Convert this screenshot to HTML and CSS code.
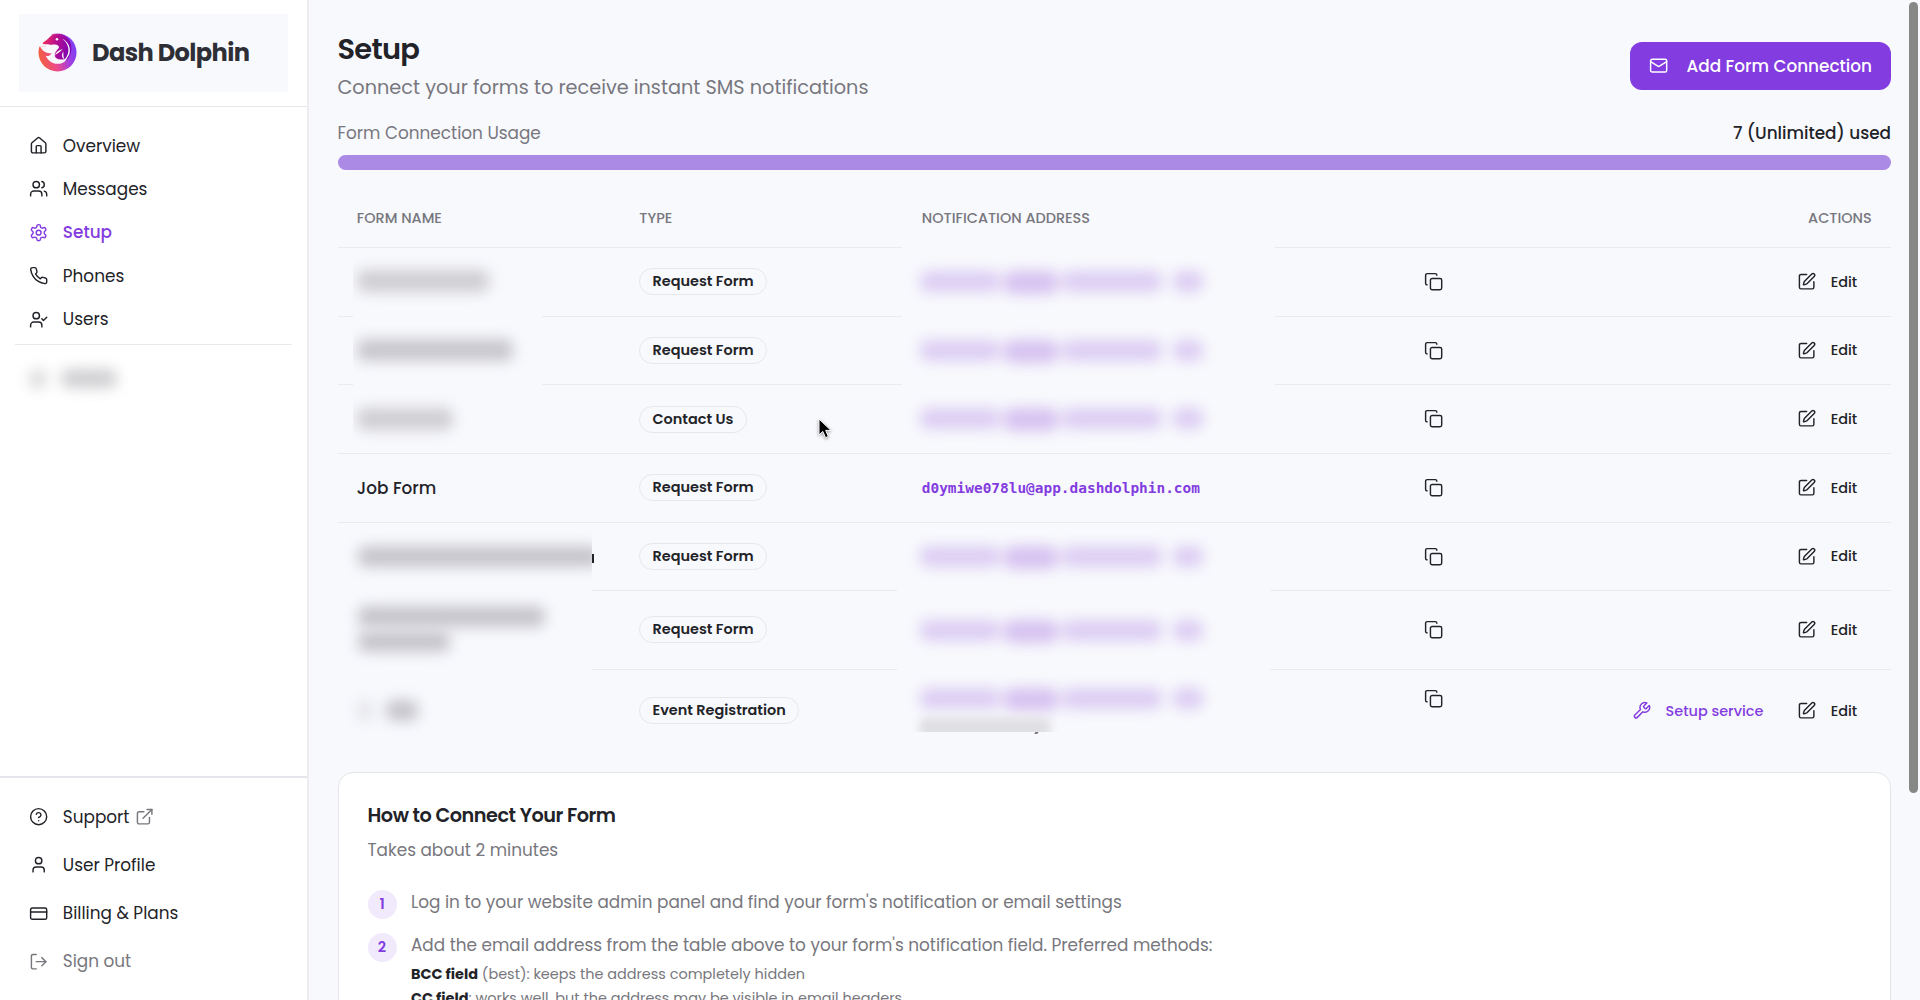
FILE: index.html
```html
<!DOCTYPE html>
<html lang="en">
<head>
  <meta charset="utf-8">
  <title>Dash Dolphin - Setup</title>
  <link rel="stylesheet" href="styles.css">
</head>
<body>
  <!-- icon set -->
  <svg class="sprite">
    <symbol id="i-home" viewBox="0 0 24 24"><path d="M15 21v-8a1 1 0 0 0-1-1h-4a1 1 0 0 0-1 1v8"/><path d="M3 10a2 2 0 0 1 .709-1.528l7-6a2 2 0 0 1 2.582 0l7 6A2 2 0 0 1 21 10v9a2 2 0 0 1-2 2H5a2 2 0 0 1-2-2z"/></symbol>
    <symbol id="i-users" viewBox="0 0 24 24"><path d="M16 21v-2a4 4 0 0 0-4-4H6a4 4 0 0 0-4 4v2"/><circle cx="9" cy="7" r="4"/><path d="M22 21v-2a4 4 0 0 0-3-3.87"/><path d="M16 3.13a4 4 0 0 1 0 7.75"/></symbol>
    <symbol id="i-settings" viewBox="0 0 24 24"><path d="M12.22 2h-.44a2 2 0 0 0-2 2v.18a2 2 0 0 1-1 1.73l-.43.25a2 2 0 0 1-2 0l-.15-.08a2 2 0 0 0-2.73.73l-.22.38a2 2 0 0 0 .73 2.73l.15.1a2 2 0 0 1 1 1.72v.51a2 2 0 0 1-1 1.74l-.15.09a2 2 0 0 0-.73 2.73l.22.38a2 2 0 0 0 2.73.73l.15-.08a2 2 0 0 1 2 0l.43.25a2 2 0 0 1 1 1.73V20a2 2 0 0 0 2 2h.44a2 2 0 0 0 2-2v-.18a2 2 0 0 1 1-1.73l.43-.25a2 2 0 0 1 2 0l.15.08a2 2 0 0 0 2.73-.73l.22-.39a2 2 0 0 0-.73-2.73l-.15-.08a2 2 0 0 1-1-1.74v-.5a2 2 0 0 1 1-1.74l.15-.09a2 2 0 0 0 .73-2.73l-.22-.38a2 2 0 0 0-2.73-.73l-.15.08a2 2 0 0 1-2 0l-.43-.25a2 2 0 0 1-1-1.73V4a2 2 0 0 0-2-2z"/><circle cx="12" cy="12" r="3"/></symbol>
    <symbol id="i-phone" viewBox="0 0 24 24"><path d="M22 16.92v3a2 2 0 0 1-2.18 2 19.79 19.79 0 0 1-8.63-3.07 19.5 19.5 0 0 1-6-6 19.79 19.79 0 0 1-3.07-8.67A2 2 0 0 1 4.11 2h3a2 2 0 0 1 2 1.72 12.84 12.84 0 0 0 .7 2.81 2 2 0 0 1-.45 2.11L8.09 9.91a16 16 0 0 0 6 6l1.27-1.27a2 2 0 0 1 2.11-.45 12.84 12.84 0 0 0 2.81.7A2 2 0 0 1 22 16.92z"/></symbol>
    <symbol id="i-user-check" viewBox="0 0 24 24"><path d="M16 21v-2a4 4 0 0 0-4-4H6a4 4 0 0 0-4 4v2"/><circle cx="9" cy="7" r="4"/><path d="m16 11 2 2 4-4"/></symbol>
    <symbol id="i-help" viewBox="0 0 24 24"><circle cx="12" cy="12" r="10"/><path d="M9.09 9a3 3 0 0 1 5.83 1c0 2-3 3-3 3"/><path d="M12 17h.01"/></symbol>
    <symbol id="i-external" viewBox="0 0 24 24"><path d="M15 3h6v6"/><path d="M10 14 21 3"/><path d="M18 13v6a2 2 0 0 1-2 2H5a2 2 0 0 1-2-2V8a2 2 0 0 1 2-2h6"/></symbol>
    <symbol id="i-user" viewBox="0 0 24 24"><path d="M19 21v-2a4 4 0 0 0-4-4H9a4 4 0 0 0-4 4v2"/><circle cx="12" cy="7" r="4"/></symbol>
    <symbol id="i-card" viewBox="0 0 24 24"><rect x="2" y="5" width="20" height="14" rx="2"/><path d="M2 10h20"/></symbol>
    <symbol id="i-logout" viewBox="0 0 24 24"><path d="M9 21H5a2 2 0 0 1-2-2V5a2 2 0 0 1 2-2h4"/><path d="m16 17 5-5-5-5"/><path d="M21 12H9"/></symbol>
    <symbol id="i-mail" viewBox="0 0 24 24"><rect x="2" y="4" width="20" height="16" rx="2"/><path d="m22 7-8.97 5.7a1.94 1.94 0 0 1-2.06 0L2 7"/></symbol>
    <symbol id="i-copy" viewBox="0 0 24 24"><rect x="8" y="8" width="14" height="14" rx="2"/><path d="M4 16c-1.1 0-2-.9-2-2V4c0-1.1.9-2 2-2h10c1.1 0 2 .9 2 2"/></symbol>
    <symbol id="i-edit" viewBox="0 0 24 24"><path d="M12 3H5a2 2 0 0 0-2 2v14a2 2 0 0 0 2 2h14a2 2 0 0 0 2-2v-7"/><path d="M18.375 2.625a1 1 0 0 1 3 3l-9.013 9.014a2 2 0 0 1-.853.505l-2.873.84a.5.5 0 0 1-.62-.62l.84-2.873a2 2 0 0 1 .506-.852z"/></symbol>
    <symbol id="i-wrench" viewBox="0 0 24 24"><path d="M14.7 6.3a1 1 0 0 0 0 1.4l1.6 1.6a1 1 0 0 0 1.4 0l3.77-3.77a6 6 0 0 1-7.94 7.94l-6.91 6.91a2.12 2.12 0 0 1-3-3l6.91-6.91a6 6 0 0 1 7.94-7.94l-3.76 3.76z"/></symbol>
  </svg>

  <div class="app">
    <aside class="sidebar">
      <div class="brand-wrap">
        <div class="brand">
          <svg class="logo" viewBox="0 0 40 40">
            <defs>
              <linearGradient id="ring" x1="0" y1=".65" x2="1" y2=".4">
                <stop offset="0" stop-color="#f4603a"/>
                <stop offset=".4" stop-color="#ec4a8c"/>
                <stop offset=".75" stop-color="#a23fe0"/>
                <stop offset="1" stop-color="#7a3ff5"/>
              </linearGradient>
              <linearGradient id="body" x1="0" y1=".3" x2="1" y2=".5">
                <stop offset="0" stop-color="#f0305e"/>
                <stop offset=".45" stop-color="#b80f8e"/>
                <stop offset="1" stop-color="#7a04b4"/>
              </linearGradient>
            </defs>
            <circle cx="20" cy="20" r="19.5" fill="url(#ring)"/>
            <path d="M-1 12L5 5 14 -1 14 14 2 14z" fill="#f8f9fd"/>
            <path d="M5 10C7 8 10 7 12 4C17-1 29 0 33 9C36 17 33 25 29 28L17 26 18 14C13 11 9 12 6 11.500C5 11 4.500 10.500 5 10z" fill="url(#body)"/>
            <path d="M2 13C5 16 9 13 14 12C19 11 23 13 21 16C18 19 16 22 18 25C21 28 27 28 30 25C27 34 13 34 8 23.500C10 24 13 23 14 21C9 20.500 4 19 2 13z" fill="#f8f9fd"/>
            <path d="M25 6C34 13 33 24 24 30C36 25 35 11 25 6zM25 16.500C21 18 18 20 17.500 23C20 20.500 23 20 25 16.500zM26 19C24 22 24 25 27 27C26 24 26 22 26 19z" fill="#f8f9fd"/>
            <circle cx="19.500" cy="6.500" r="1.300" fill="#f8f9fd"/>
          </svg>
          <span class="brand-name">Dash Dolphin</span>
        </div>
      </div>

      <nav class="nav">
        <a class="nav-item"><svg class="icon"><use href="#i-home"/></svg>Overview</a>
        <a class="nav-item"><svg class="icon"><use href="#i-users"/></svg>Messages</a>
        <a class="nav-item active"><svg class="icon"><use href="#i-settings"/></svg>Setup</a>
        <a class="nav-item"><svg class="icon"><use href="#i-phone"/></svg>Phones</a>
        <a class="nav-item"><svg class="icon"><use href="#i-user-check"/></svg>Users</a>
      </nav>
      <div class="nav-hidden">
        <span class="smear smear-icon"></span>
        <span class="smear smear-label"></span>
      </div>

      <div class="nav-footer">
        <a class="nav-item"><svg class="icon"><use href="#i-help"/></svg>Support<svg class="icon external"><use href="#i-external"/></svg></a>
        <a class="nav-item"><svg class="icon"><use href="#i-user"/></svg>User Profile</a>
        <a class="nav-item"><svg class="icon"><use href="#i-card"/></svg>Billing &amp; Plans</a>
        <a class="nav-item muted"><svg class="icon"><use href="#i-logout"/></svg>Sign out</a>
      </div>
    </aside>

    <main class="main">
      <header class="page-header">
        <div>
          <h1>Setup</h1>
          <p class="subtitle">Connect your forms to receive instant SMS notifications</p>
        </div>
        <button class="btn-primary"><svg class="icon"><use href="#i-mail"/></svg>Add Form Connection</button>
      </header>

      <div class="usage">
        <span>Form Connection Usage</span>
        <span class="usage-count">7 (Unlimited) used</span>
      </div>
      <div class="progress"></div>

      <div class="table">
        <div class="row head">
          <div>FORM NAME</div>
          <div>TYPE</div>
          <div>NOTIFICATION ADDRESS</div>
          <div class="actions">ACTIONS</div>
        </div>
        <div class="row">
          <div></div>
          <div><span class="badge">Request Form</span></div>
          <div class="address"><svg class="icon copy"><use href="#i-copy"/></svg></div>
          <div class="actions"><a class="action"><svg class="icon"><use href="#i-edit"/></svg>Edit</a></div>
        </div>
        <div class="row">
          <div></div>
          <div><span class="badge">Request Form</span></div>
          <div class="address"><svg class="icon copy"><use href="#i-copy"/></svg></div>
          <div class="actions"><a class="action"><svg class="icon"><use href="#i-edit"/></svg>Edit</a></div>
        </div>
        <div class="row">
          <div></div>
          <div><span class="badge">Contact Us</span></div>
          <div class="address"><svg class="icon copy"><use href="#i-copy"/></svg></div>
          <div class="actions"><a class="action"><svg class="icon"><use href="#i-edit"/></svg>Edit</a></div>
        </div>
        <div class="row">
          <div class="name">Job Form</div>
          <div><span class="badge">Request Form</span></div>
          <div class="address"><code>d0ymiwe078lu@app.dashdolphin.com</code><svg class="icon copy"><use href="#i-copy"/></svg></div>
          <div class="actions"><a class="action"><svg class="icon"><use href="#i-edit"/></svg>Edit</a></div>
        </div>
        <div class="row">
          <div></div>
          <div><span class="badge">Request Form</span></div>
          <div class="address"><svg class="icon copy"><use href="#i-copy"/></svg></div>
          <div class="actions"><a class="action"><svg class="icon"><use href="#i-edit"/></svg>Edit</a></div>
        </div>
        <div class="row tall">
          <div></div>
          <div><span class="badge">Request Form</span></div>
          <div class="address"><svg class="icon copy"><use href="#i-copy"/></svg></div>
          <div class="actions"><a class="action"><svg class="icon"><use href="#i-edit"/></svg>Edit</a></div>
        </div>
        <div class="row last">
          <div></div>
          <div><span class="badge">Event Registration</span></div>
          <div class="address"><svg class="icon copy"><use href="#i-copy"/></svg></div>
          <div class="actions">
            <a class="action service"><svg class="icon"><use href="#i-wrench"/></svg>Setup service</a>
            <a class="action"><svg class="icon"><use href="#i-edit"/></svg>Edit</a>
          </div>
        </div>

        <!-- redaction overlays -->
        <div class="mask mask-names-top">
          <i class="smear n1"></i><i class="smear n2"></i><i class="smear n3"></i>
        </div>
        <div class="mask mask-names-bottom">
          <i class="smear n4"></i><i class="smear n5"></i><i class="smear n6"></i><i class="smear n7"></i><i class="smear n8"></i>
        </div>
        <span class="sliver"></span>
        <div class="mask mask-mail-top">
          <div class="mail m1"><i></i><i></i><i></i><i></i></div>
          <div class="mail m2"><i></i><i></i><i></i><i></i></div>
          <div class="mail m3"><i></i><i></i><i></i><i></i></div>
        </div>
        <div class="mask mask-mail-bottom">
          <div class="mail m4"><i></i><i></i><i></i><i></i></div>
          <div class="mail m5"><i></i><i></i><i></i><i></i></div>
          <div class="mail m6"><i></i><i></i><i></i><i></i></div>
          <i class="smear note"></i>
        </div>
        <span class="tail"></span>
      </div>

      <section class="card">
        <h2>How to Connect Your Form</h2>
        <p class="card-sub">Takes about 2 minutes</p>
        <div class="step">
          <span class="num">1</span>
          <div>Log in to your website admin panel and find your form's notification or email settings</div>
        </div>
        <div class="step">
          <span class="num">2</span>
          <div>
            Add the email address from the table above to your form's notification field. Preferred methods:
            <ul>
              <li><b>BCC field</b> (best): keeps the address completely hidden</li>
              <li><b>CC field</b>: works well, but the address may be visible in email headers.</li>
            </ul>
          </div>
        </div>
      </section>
    </main>
  </div>

  <div class="scrollbar"></div>
  <svg class="cursor" viewBox="0 0 14 22"><path d="M1 1v16l3.800-3.600 2.700 6.300 2.900-1.200-2.700-6.100H13z"/></svg>
</body>
</html>
```
FILE: styles.css
```css
* {
  box-sizing: border-box;
}

body {
  margin: 0;
  height: 1000px;
  overflow: hidden;
  background: #f8f9fd;
  color: #222328;
  font-family: Poppins, Inter, "Liberation Sans", sans-serif;
  font-size: 16.86px;
  line-height: 24px;
}

h1, h2, p, ul {
  margin: 0;
  padding: 0;
}

.sprite {
  display: none;
}

.icon {
  width: 19.3px;
  height: 19.3px;
  flex: none;
  fill: none;
  stroke: currentColor;
  stroke-width: 1.8;
  stroke-linecap: round;
  stroke-linejoin: round;
}

.app {
  display: flex;
  height: 1000px;
  overflow: hidden;
}

/* sidebar */
.sidebar {
  width: 308.5px;
  flex: none;
  display: flex;
  flex-direction: column;
  background: #fff;
  border-right: 2px solid #ececf1;
}

.brand-wrap {
  height: 107px;
  padding: 14px 18.5px 14px 19px;
  border-bottom: 1px solid #e6e6ea;
}

.brand {
  height: 77.5px;
  display: flex;
  align-items: center;
  gap: 15px;
  padding-left: 19px;
  background: #f8f9fd;
}

.logo {
  width: 39px;
  height: 39px;
}

.brand-name {
  padding-top: 1px;
  font-size: 24.1px;
  font-weight: 700;
  letter-spacing: -0.6px;
  color: #2e2f36;
}

.nav {
  margin: 0 14.5px;
  padding: 17px 0 3px;
  height: 237.5px;
  border-bottom: 1.5px solid #e9e9ee;
}

.nav-item {
  display: flex;
  align-items: center;
  gap: 14.5px;
  height: 43.4px;
  padding-left: 14.5px;
}

.nav-item.active {
  color: #833ce0;
  font-weight: 500;
}

.nav-item.muted {
  color: #77777d;
}

.nav-item .external {
  margin-left: -9px;
  color: #77777d;
}

.nav-hidden {
  display: flex;
  align-items: center;
  gap: 14px;
  margin-top: 19px;
  padding-left: 29px;
  height: 30px;
}

.smear {
  display: block;
  border-radius: 8px;
  background: #cfcfd2;
  filter: blur(7px);
}

.smear-icon {
  width: 18px;
  height: 20px;
  background: #dcdcde;
}

.smear-label {
  width: 56px;
  height: 19px;
}

.nav-footer {
  margin-top: auto;
  height: 224px;
  padding: 15px 14.5px 0;
  border-top: 2px solid #e4e4ea;
}

.nav-footer .nav-item {
  height: 48.1px;
}

/* main */
.main {
  flex: 1;
  padding: 28px 29px 0;
}

.page-header {
  display: flex;
  justify-content: space-between;
  height: 90px;
}

h1 {
  font-size: 28.9px;
  font-weight: 600;
  line-height: 42px;
  letter-spacing: -0.72px;
}

.subtitle {
  font-size: 19.27px;
  line-height: 36px;
  color: #77777d;
}

.btn-primary {
  display: flex;
  align-items: center;
  gap: 18.5px;
  margin-top: 14px;
  height: 48px;
  padding: 0 19px;
  border: none;
  border-radius: 12px;
  background: #833ce0;
  color: #fff;
  font: inherit;
  font-weight: 500;
}

.usage {
  display: flex;
  justify-content: space-between;
  height: 37px;
  padding-top: 3px;
  color: #77777d;
}

.usage-count {
  color: #222328;
  font-weight: 500;
}

.progress {
  height: 15px;
  border-radius: 7.5px;
  background: #ab8ae6;
}

/* table */
.table {
  position: relative;
  margin-top: 18.5px;
  height: 583px;
}

.row {
  display: grid;
  grid-template-columns: 282.5px 282.5px 563px 1fr;
  align-items: center;
  height: 68.65px;
  border-bottom: 1px solid #e9eaee;
}

.row > div {
  padding: 0 19.3px;
}

.row.head {
  height: 59.5px;
  font-size: 14.45px;
  font-weight: 500;
  color: #77777d;
}

.row.tall {
  height: 78.3px;
}

.row.last {
  height: 82px;
  border-bottom: none;
}

.name {
  font-weight: 500;
}

.badge {
  display: inline-block;
  height: 27px;
  padding: 0 12.2px;
  border: 1px solid #e6e7eb;
  border-radius: 14px;
  font-size: 14.45px;
  font-weight: 600;
  line-height: 25px;
}

.address {
  display: flex;
  align-items: center;
}

.address code {
  font-family: "DejaVu Sans Mono", monospace;
  font-size: 14.45px;
  font-weight: 700;
  color: #833ce0;
}

.row .address {
  padding-right: 22px;
}

.copy {
  margin-left: auto;
}

.last .copy {
  margin-bottom: 23px;
}

.actions {
  display: flex;
  justify-content: flex-end;
  font-size: 14.45px;
  font-weight: 500;
}

.action {
  display: flex;
  align-items: center;
  gap: 14.5px;
  padding: 0 14.5px;
}

.action.service {
  color: #833ce0;
  margin-right: 4.5px;
}

/* redaction overlays */
.mask {
  position: absolute;
  overflow: hidden;
  background: #f8f9fd;
}

.mask .smear,
.mail {
  position: absolute;
}

.mask-names-top {
  left: 15.5px;
  top: 66px;
  width: 189px;
  height: 190px;
}

.mask-names-bottom {
  left: 0;
  top: 340px;
  width: 254.5px;
  height: 210px;
}

.mask-mail-top {
  left: 564.5px;
  top: 56px;
  width: 373px;
  height: 205px;
}

.mask-mail-bottom {
  left: 559.5px;
  top: 345px;
  width: 373px;
  height: 198.5px;
}

.n1, .n2, .n3 {
  left: 4px;
  height: 22px;
  background: #cecdd2;
}

.n1 { top: 15px; width: 132px; }
.n2 { top: 84px; width: 156px; background: #c7c6cc; }
.n3 { top: 153px; width: 96px; }

.n4, .n5, .n6, .n7, .n8 {
  height: 21px;
  background: #c5c4ca;
}

.n4 { left: 20px; top: 17px; width: 242px; }
.n5 { left: 20px; top: 77px; width: 187px; }
.n6 { left: 20px; top: 102px; width: 92px; }
.n7 { left: 20px; top: 171px; width: 14px; background: #e2e2e7; }
.n8 { left: 48px; top: 171px; width: 32px; }

.mail {
  display: flex;
  gap: 4px;
  filter: blur(7px);
}

.mail i {
  width: 80px;
  height: 21px;
  border-radius: 8px;
  background: #dccdf3;
}

.mail i:nth-child(2) {
  width: 54px;
  height: 23px;
  background: #d6c1f0;
}

.mail i:nth-child(3) {
  width: 100px;
  background: #dccdf3;
}

.mail i:nth-child(4) {
  width: 30px;
  margin-left: 7px;
}

.mask-mail-top .mail { left: 18px; }
.m1 { top: 26px; }
.m2 { top: 95px; }
.m3 { top: 163px; }

.mask-mail-bottom .mail { left: 23px; }
.m4 { top: 12px; }
.m5 { top: 86px; }
.m6 { top: 154px; }

.smear.note {
  left: 22px;
  top: 183px;
  width: 132px;
  height: 22px;
  background: #e0e0e4;
  filter: blur(4px);
}

.sliver {
  position: absolute;
  left: 254.5px;
  top: 365px;
  width: 1.5px;
  height: 9px;
  background: #222328;
}

.tail {
  position: absolute;
  left: 697px;
  top: 543.5px;
  width: 2.5px;
  height: 1.5px;
  background: #77777d;
  transform: skewX(-30deg);
}

/* instructions */
.card {
  height: 400px;
  padding: 29px;
  border: 1.5px solid #e5e5e9;
  border-radius: 15px;
  background: #fff;
  color: #77777d;
}

h2 {
  font-size: 19.27px;
  font-weight: 600;
  line-height: 28px;
  letter-spacing: -0.48px;
  color: #222328;
}

.card-sub {
  margin-top: 8px;
  margin-bottom: 28.5px;
}

.step {
  display: flex;
  gap: 14.5px;
  margin-bottom: 14.4px;
}

.num {
  flex: none;
  width: 29px;
  height: 29px;
  border-radius: 50%;
  background: #f0eafc;
  color: #833ce0;
  font-size: 14.45px;
  font-weight: 600;
  line-height: 29px;
  text-align: center;
}

.step ul {
  list-style: none;
  padding-top: 5px;
  font-size: 14.45px;
}

.step li b {
  color: #222328;
}

.scrollbar {
  position: absolute;
  left: 1909px;
  top: 2px;
  width: 9px;
  height: 791px;
  border-radius: 5px;
  background: #868886;
}

.cursor {
  position: absolute;
  left: 817.5px;
  top: 418px;
  width: 14px;
  height: 22px;
  fill: #000;
  stroke: #fff;
  stroke-width: 1;
  filter: drop-shadow(0 1px 1.5px rgba(0, 0, 0, .4));
}
```
